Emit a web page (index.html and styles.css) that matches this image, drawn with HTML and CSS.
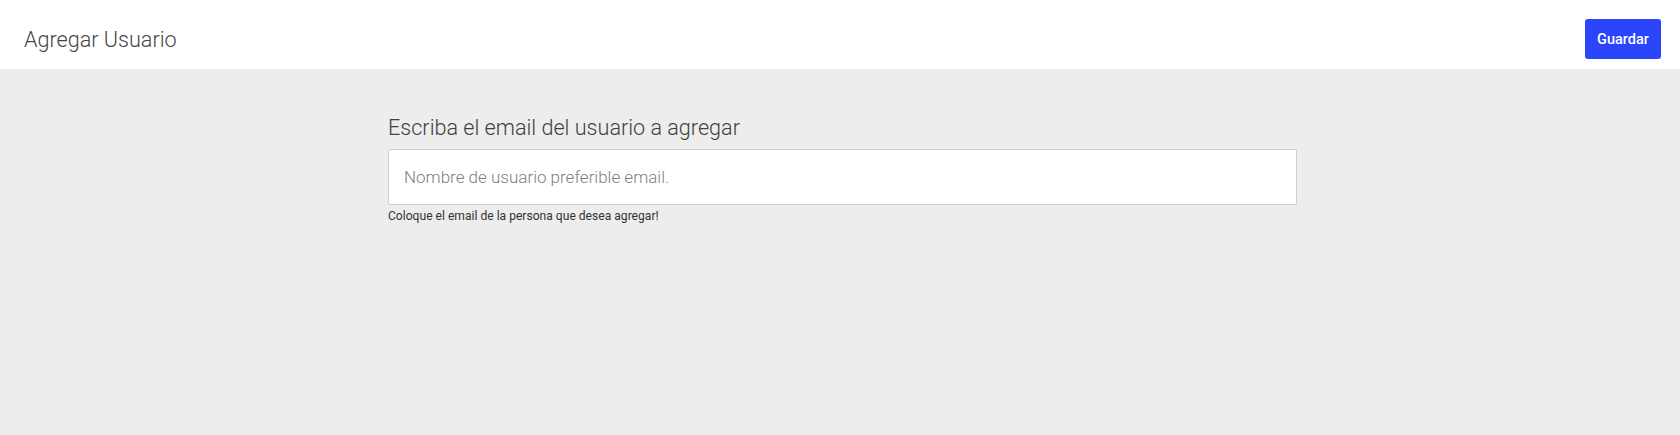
FILE: index.html
```html
<!DOCTYPE html>
<html lang="es">
<head>
<meta charset="utf-8">
<title>Agregar Usuario</title>
<link rel="stylesheet" href="styles.css">
</head>
<body>
<header class="topbar">
  <h1 class="title">Agregar Usuario</h1>
  <button class="btn-save" type="button">Guardar</button>
</header>
<main class="content">
  <form class="form">
    <label class="label" for="email">Escriba el email del usuario a agregar</label>
    <input class="input" id="email" type="text" placeholder="Nombre de usuario preferible email.">
    <small class="help">Coloque el email de la persona que desea agregar!</small>
  </form>
</main>
</body>
</html>
```
FILE: styles.css
```css
html, body {
  margin: 0;
  padding: 0;
  height: 100%;
}
body {
  font-family: Roboto, "Liberation Sans", sans-serif;
  background: #ededed;
  color: #444;
}
.topbar {
  display: flex;
  align-items: center;
  justify-content: space-between;
  height: 69px;
  box-sizing: border-box;
  padding: 9px 19px 0 24px;
  background: #fff;
}
.title {
  margin: 0;
  font-size: 21.6px;
  font-weight: 300;
  color: #444;
}
.btn-save {
  width: 76px;
  height: 40px;
  border: none;
  border-radius: 3px;
  background: #2a45fb;
  color: #fff;
  font-family: inherit;
  font-size: 14.5px;
  font-weight: 500;
  cursor: pointer;
}
.content {
  padding-top: 44px;
}
.form {
  display: flex;
  flex-direction: column;
  width: 909px;
  margin-left: calc(50% - 452px);
}
.label {
  font-size: 21.6px;
  font-weight: 300;
  color: #3f3f3f;
  line-height: 30px;
  margin-bottom: 6px;
}
.input {
  box-sizing: border-box;
  height: 56px;
  border: 1px solid #cfcfcf;
  border-radius: 2px;
  background: #fff;
  padding: 0 15px;
  font-family: inherit;
  font-size: 17px;
  font-weight: 300;
  color: #444;
  outline: none;
}
.input::placeholder {
  color: #808080;
}
.help {
  margin-top: 4px;
  font-size: 12.1px;
  color: #333;
}
```
